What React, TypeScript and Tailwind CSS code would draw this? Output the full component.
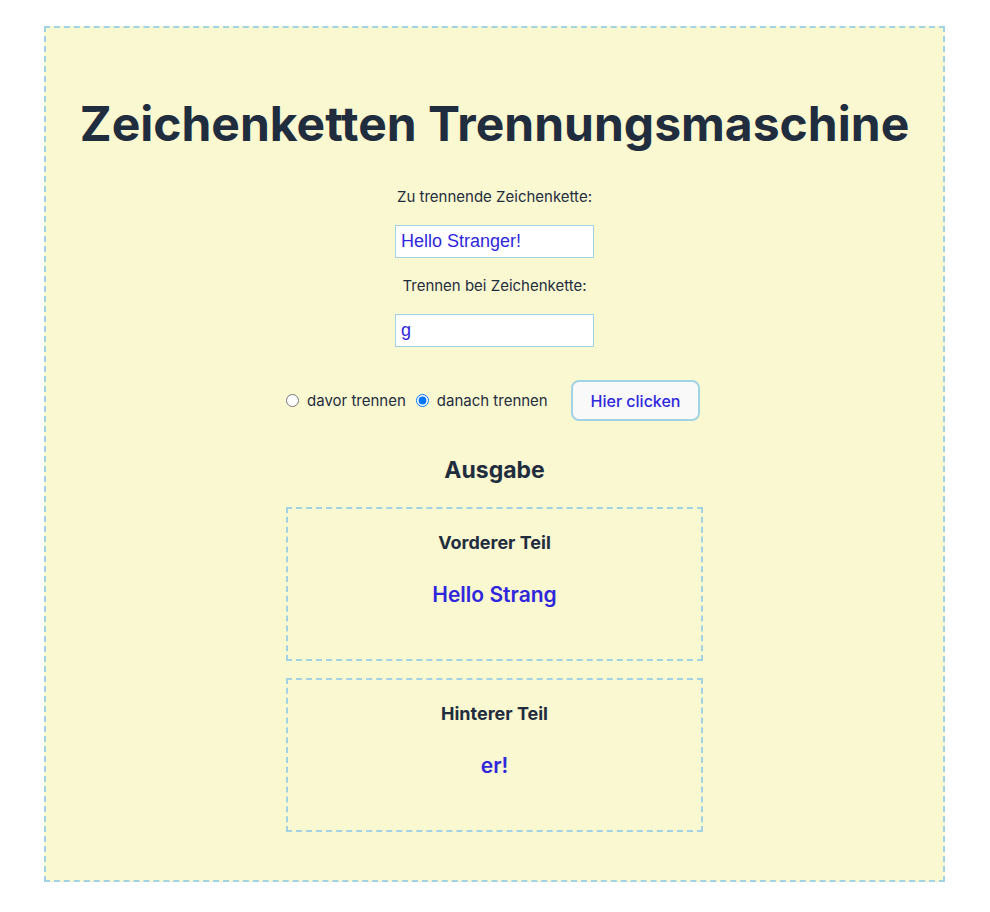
import { useState } from "react";

type Side = "before" | "after";

function split(text: string, mark: string, side: Side): [string, string] {
  const found = mark ? text.indexOf(mark) : -1;
  if (found < 0) return [text, ""];
  const at = side === "before" ? found : found + mark.length;
  return [text.slice(0, at), text.slice(at)];
}

function Part({ title, value }: { title: string; value: string }) {
  return (
    <section className="flex min-h-[154px] flex-col items-center border-2 border-dashed border-[#a1d3e5] pt-5">
      <h3 className="text-lg leading-7 font-bold">{title}</h3>
      <output className="mt-[22px] text-[21px] leading-8 font-semibold text-[#2f27dc]">{value}</output>
    </section>
  );
}

function TextField({ id, label, value, onChange }: { id: string; label: string; value: string; onChange: (value: string) => void }) {
  return (
    <div className="flex flex-col items-center gap-4">
      <label htmlFor={id} className="leading-6">{label}</label>
      <input
        id={id}
        value={value}
        onChange={(e) => onChange(e.target.value)}
        className="h-[33px] w-[199px] border border-[#a1d3e5] bg-white px-[5px] font-['Liberation_Sans',sans-serif] text-lg text-[#2f27dc]"
      />
    </div>
  );
}

export default function App() {
  const [text, setText] = useState("Hello Stranger!");
  const [mark, setMark] = useState("g");
  const [side, setSide] = useState<Side>("after");
  const [parts, setParts] = useState<[string, string]>(["Hello Strang", "er!"]);

  return (
    <main className="mt-[26px] mr-[45px] mb-7 ml-11 flex flex-col items-center border-2 border-dashed border-[#a1d3e5] bg-[#faf8d0] pt-16 pb-12 font-['Inter',sans-serif] text-[15px] text-[#1f2d3f]">
      <h1 className="text-center text-5xl leading-[64px] font-bold">
        Zeichenketten Trennungsmaschine
      </h1>
      <form
        className="mt-[29px] flex flex-col items-center gap-4"
        onSubmit={(e) => {
          e.preventDefault();
          setParts(split(text, mark, side));
        }}
      >
        <TextField id="text" label="Zu trennende Zeichenkette:" value={text} onChange={setText} />
        <TextField id="mark" label="Trennen bei Zeichenkette:" value={mark} onChange={setMark} />
        <div className="mt-[17px] flex w-[417px] items-center">
          <input id="before" type="radio" name="side" className="size-[13px]" checked={side === "before"} onChange={() => setSide("before")} />
          <label htmlFor="before" className="pt-0.5 pl-2">davor trennen</label>
          <input id="after" type="radio" name="side" className="ml-2.5 size-[13px]" checked={side === "after"} onChange={() => setSide("after")} />
          <label htmlFor="after" className="pt-0.5 pl-2">danach trennen</label>
          <button type="submit" className="mr-[3px] ml-auto h-[41px] w-[129px] rounded-lg border-2 border-[#a1d3e5] bg-[#f9f9f9] text-base font-medium text-[#2f27dc]">
            Hier clicken
          </button>
        </div>
      </form>
      <h2 className="mt-[33px] text-[23px] leading-8 font-bold">Ausgabe</h2>
      <div className="mt-[21px] flex w-[417px] flex-col gap-[17px]">
        <Part title="Vorderer Teil" value={parts[0]} />
        <Part title="Hinterer Teil" value={parts[1]} />
      </div>
    </main>
  );
}
